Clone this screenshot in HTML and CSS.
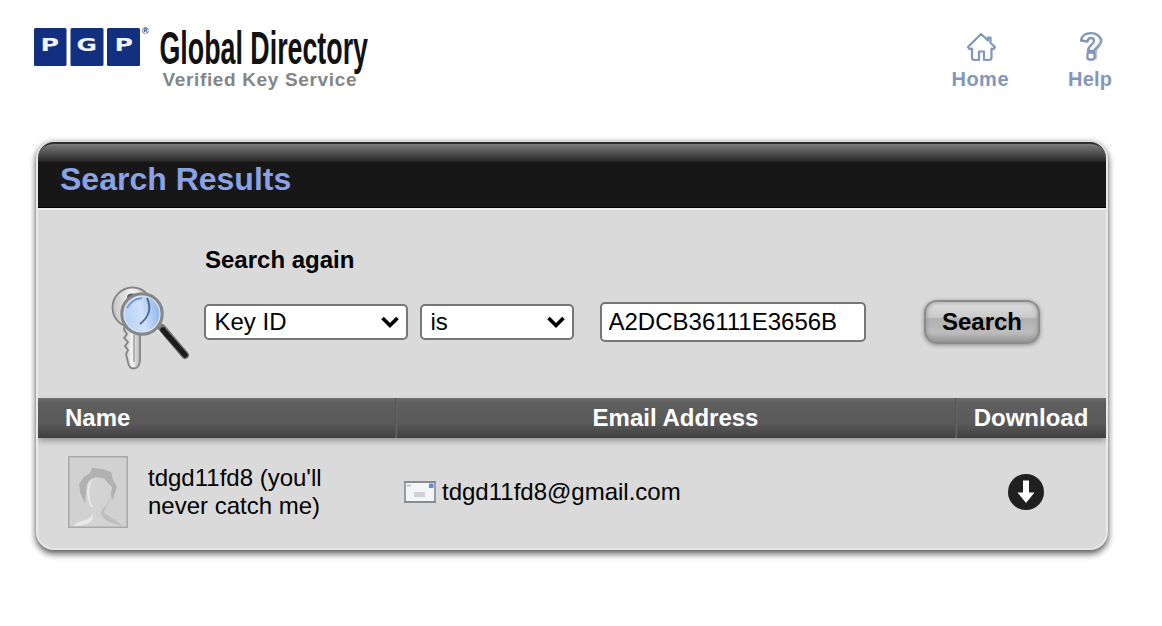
FILE: index.html
```html
<!DOCTYPE html>
<html lang="en">
<head>
<meta charset="utf-8">
<title>PGP Global Directory - Search Results</title>
<link rel="stylesheet" href="styles.css">
</head>
<body>
<header class="masthead">
  <svg class="logo" width="340" height="70" viewBox="0 0 340 70">
    <g fill="#12307f">
      <rect x="0" y="0" width="32.500" height="38" rx="1.500"/>
      <rect x="36.500" y="0" width="33" height="38" rx="1.500"/>
      <rect x="73" y="0" width="33" height="38" rx="1.500"/>
    </g>
    <g class="logo-letters">
      <text x="6.500" y="22.500" textLength="18.500" lengthAdjust="spacingAndGlyphs">P</text>
      <text x="42.500" y="22.500" textLength="20.500" lengthAdjust="spacingAndGlyphs">G</text>
      <text x="80.500" y="22.500" textLength="18.500" lengthAdjust="spacingAndGlyphs">P</text>
    </g>
    <text class="logo-mark" x="108" y="6">®</text>
    <text class="logo-title" x="125.500" y="35.500" textLength="208.500" lengthAdjust="spacingAndGlyphs">Global Directory</text>
    <text class="logo-tagline" x="128.500" y="58" textLength="194" lengthAdjust="spacing">Verified Key Service</text>
  </svg>
  <nav class="nav">
    <a class="nav-item">
      <svg width="32" height="32" viewBox="0 0 32 32" fill="none" stroke="#8296bb" stroke-width="2.200" stroke-linejoin="round"><path d="M17 3 4 16 5.500 18 8 17.500V26.500Q8 29 10.500 29H15V20.500H20V29H25Q27.500 29 27.500 26.500V17.500L29.500 18 31 16 26.500 12V6.500H24V9.500Z"/></svg>
      <svg class="nav-text" width="60" height="28"><text class="nav-label" x="1.500" y="15.500" textLength="57">Home</text></svg>
    </a>
    <a class="nav-item">
      <svg width="32" height="32" viewBox="0 0 32 32" fill="none" stroke="#8296bb" stroke-width="2.300" stroke-linejoin="round"><path d="M7 9.500C8 4.500 12 2.200 17 2.200S27 5 27 10C27 15.500 20.500 16 20.500 20H14C14 14 20 13.500 20 10C20 8 18.500 7 16.800 7S14 8 13.500 10.500Z"/><path d="M27.500 7C30 13 22 17 22 21V28" stroke="#9dadca" stroke-width="1.500"/><rect x="13.500" y="21.500" width="7" height="7" rx="2"/></svg>
      <svg class="nav-text" width="60" height="28"><text class="nav-label" x="8" y="15.500" textLength="44">Help</text></svg>
    </a>
  </nav>
</header>
<main class="panel">
  <h1 class="panel-title">Search Results</h1>
  <form class="search">
    <svg class="search-icon" width="90" height="90" viewBox="0 0 90 90">
      <defs>
        <linearGradient id="metal"><stop offset="0" stop-color="#c4c4c4"/><stop offset=".5" stop-color="#f3f3f3"/><stop offset="1" stop-color="#b5b5b5"/></linearGradient>
        <linearGradient id="glass" x1="0" x2="1" y1=".6" y2=".4"><stop offset="0" stop-color="#b3cff8"/><stop offset=".5" stop-color="#cfe1fa"/><stop offset="1" stop-color="#89afe9"/></linearGradient>
      </defs>
      <path d="M21 41 20 47 23 51 20 55 24 59 21 63 24 67 22 71 24 79Q25 85.500 29.500 85.500Q35 85.500 36 78V46Z" fill="url(#metal)" stroke="#858585" stroke-width="1.800"/>
      <path d="M30 52V79" stroke="#aaa" stroke-width="1.800"/>
      <circle cx="28.500" cy="24.500" r="20" fill="url(#metal)" stroke="#858585" stroke-width="1.800"/>
      <ellipse cx="28" cy="14" rx="5" ry="3.500" fill="#555"/>
      <path d="M53 44 61 51" stroke="#eee" stroke-width="6"/>
      <path d="M58 45 81 72" stroke="#777" stroke-width="8" stroke-linecap="round"/>
      <path d="M59 47 81 72" stroke="#1c1c1c" stroke-width="5.500" stroke-linecap="round"/>
      <circle cx="38" cy="31" r="20" fill="url(#glass)" stroke="#85888b" stroke-width="3.500"/>
      <circle cx="38" cy="31" r="18" fill="none" stroke="#dce3ec" stroke-width="1.200"/>
      <path d="M43 15Q50 30 36 41" fill="none" stroke="#496590" stroke-width="1.800"/>
      <path d="M23 25Q28 16 38 15" fill="none" stroke="#739bd5" stroke-width="2"/>
    </svg>
    <div class="search-body">
      <h2 class="search-heading">Search again</h2>
      <div class="search-fields">
        <div class="select select-field"><select aria-label="Field"><option>Key ID</option></select><svg class="chevron" width="18" height="13" viewBox="0 0 18 13"><path d="M1.500 2 9 9.500 16.500 2"/></svg></div>
        <div class="select select-match"><select aria-label="Match"><option>is</option></select><svg class="chevron" width="18" height="13" viewBox="0 0 18 13"><path d="M1.500 2 9 9.500 16.500 2"/></svg></div>
        <input class="query" type="text" aria-label="Query" value="A2DCB36111E3656B">
        <button class="search-button" type="button">Search</button>
      </div>
    </div>
  </form>
  <div class="grid grid-head">
    <div class="head-cell head-name">Name</div>
    <div class="head-cell">Email Address</div>
    <div class="head-cell">Download</div>
  </div>
  <div class="grid grid-row">
    <div class="person">
      <svg width="60" height="72" viewBox="0 0 60 72">
        <rect x=".75" y=".75" width="58.500" height="70.500" fill="#d1d1d1" stroke="#a8a8a8" stroke-width="1.500"/>
        <path d="M17 48 12 36 11 28 16 21 22 17 24 12 34 13 43 16 45 24 49 31 44 45 42 31 37 23 28 21 20 26 18 37Z" fill="#b1b1b1"/>
        <path d="M22 50C18 42 17 30 21 25C27 19 35 21 41 28L44 31C43 42 39 48 35 52V58Q44 64 54 70H5C16 65 26 66 24 58Z" fill="#d3d3d3"/>
        <path d="M23 51C17 39 18 27 25 22C20 31 20 43 25 51Z" fill="#e8e8e8"/>
        <path d="M5 70C12 63 22 66 24 58Q28 67 10 70Z" fill="#e8e8e8"/>
        <path d="M43 42C41 49 36 52 36 57Q47 64 55 70Q34 66 33 57Q33 53 38 50Z" fill="#bebebe"/>
      </svg>
      <span class="person-name">tdgd11fd8 (you'll<br>never catch me)</span>
    </div>
    <div class="email">
      <svg width="32" height="22" viewBox="0 0 32 22">
        <rect x="1" y="1" width="30" height="20" fill="#f4f5f7" stroke="#93a0aa" stroke-width="2"/>
        <path d="M0 1H32M0 21H32" stroke="#858585" stroke-width="1.500"/>
        <path d="M3 4.500H7" stroke="#c7c7c7" stroke-width="2"/>
        <rect x="25" y="2.500" width="4.500" height="4.500" fill="#6489dd"/>
        <path d="M10 13.500H21" stroke="#d2d2d2" stroke-width="5"/>
      </svg>
      <span>tdgd11fd8@gmail.com</span>
    </div>
    <div class="download">
      <svg width="36" height="36" viewBox="0 0 36 36"><circle cx="18" cy="18" r="18" fill="#202020"/><path d="M15 6.500H21V18.500H26.500L18 29 9.500 18.500H15Z" fill="#fff"/></svg>
    </div>
  </div>
</main>
</body>
</html>
```
FILE: styles.css
```css
* { box-sizing: border-box; }
body {
  margin: 0;
  min-height: 626px;
  background: #fff;
  color: #000;
  font: 24px/28px "Liberation Sans", Arial, sans-serif;
}
svg { display: block; flex: none; }
.masthead {
  height: 141px;
  padding: 28px 42px 0 34px;
  display: flex;
  justify-content: space-between;
}
.logo { overflow: visible; }
.logo-letters { fill: #f2f4fb; font: bold 18px "DejaVu Sans", sans-serif; }
.logo-mark { fill: #12307f; font: bold 9px "Liberation Sans", sans-serif; }
.logo-title { fill: #111; font: bold 46px "Liberation Sans", sans-serif; }
.logo-tagline { fill: #858585; font: bold 19px "Liberation Sans", sans-serif; }
.nav { display: flex; gap: 50px; padding-top: 3px; }
.nav-item { width: 60px; display: flex; flex-direction: column; align-items: center; gap: 7px; }
.nav-text { overflow: visible; }
.nav-label { fill: #8296bb; font: bold 20px "Liberation Sans", sans-serif; }
.panel {
  width: 1072px;
  height: 409px;
  margin-left: 36px;
  padding-top: 1px;
  border: 2px solid #e8e8e8;
  border-top: 0;
  border-radius: 18px;
  background: #dadada;
  box-shadow: 0 4px 7px rgba(0, 0, 0, .6), 0 0 5px rgba(0, 0, 0, .2);
}
.panel-title {
  height: 66px;
  margin: 0;
  padding: 19px 22px 0;
  border-top: 2px solid #303030;
  border-bottom: 1px solid #050505;
  border-radius: 16px 16px 0 0;
  background: linear-gradient(#7c7c7c, #2b2b2b 17px, #171717 18px);
  color: #8ba1e5;
  font-size: 32px;
  line-height: 32px;
}
.search {
  height: 190px;
  padding: 38px 0 0 66px;
  border-top: 2px solid #ebebeb;
  display: flex;
}
.search-icon { margin-top: 35px; }
.search-body { margin-left: 10px; flex: 1; }
.search-heading { margin: 0; padding-left: 1px; font-size: 24px; line-height: 24px; }
.search-fields { display: flex; align-items: center; margin-top: 26px; height: 48px; }
.select { position: relative; height: 36px; }
.select select {
  appearance: none;
  width: 100%;
  height: 100%;
  padding: 0 8.500px;
  border: 2px solid #767676;
  border-radius: 5px;
  background: #fff;
  color: #000;
  font: inherit;
}
.select-field { width: 204px; margin-right: 12px; }
.select-match { width: 154px; margin-right: 26px; }
.chevron { position: absolute; right: 9px; top: 12px; fill: none; stroke: #000; stroke-width: 3.6; }
.query {
  width: 266px;
  height: 40px;
  padding: 0 6.500px;
  border: 2px solid #767676;
  border-radius: 5px;
  background: #fff;
  font: inherit;
  letter-spacing: 0;
}
.search-button {
  width: 116px;
  height: 44px;
  margin-left: 58px;
  padding: 0;
  border: 2px solid #8c8c8c;
  border-radius: 13px;
  background: linear-gradient(#e0e0e0, #cacaca 38%, #b0b0b0 42%, #bdbdbd 76%, #999);
  box-shadow: inset 0 0 5px #909090, 0 1px 4px #888;
  color: #000;
  font: bold 24px/28px "Liberation Sans", Arial, sans-serif;
}
.grid { display: grid; grid-template-columns: 357px 560px 151px; }
.grid-head {
  height: 40px;
  background: linear-gradient(#6f6f6f, #5e5e5e 5px, #5a5a5a 25px, #404040);
  box-shadow: 0 2px 7px rgba(0, 0, 0, .4);
  clip-path: inset(0 0 -12px 0);
  color: #fff;
  font-weight: bold;
  text-align: center;
}
.head-cell { padding-top: 6px; }
.head-cell + .head-cell { border-left: 1px solid #505050; box-shadow: inset 1px 0 #686868; }
.head-name { padding-left: 27px; text-align: left; }
.grid-row { height: 107px; align-items: center; }
.person { padding-left: 30px; display: flex; align-items: center; gap: 20px; }
.email { padding-left: 9px; display: flex; align-items: center; gap: 6px; }
.download { padding-left: 53px; }
```
